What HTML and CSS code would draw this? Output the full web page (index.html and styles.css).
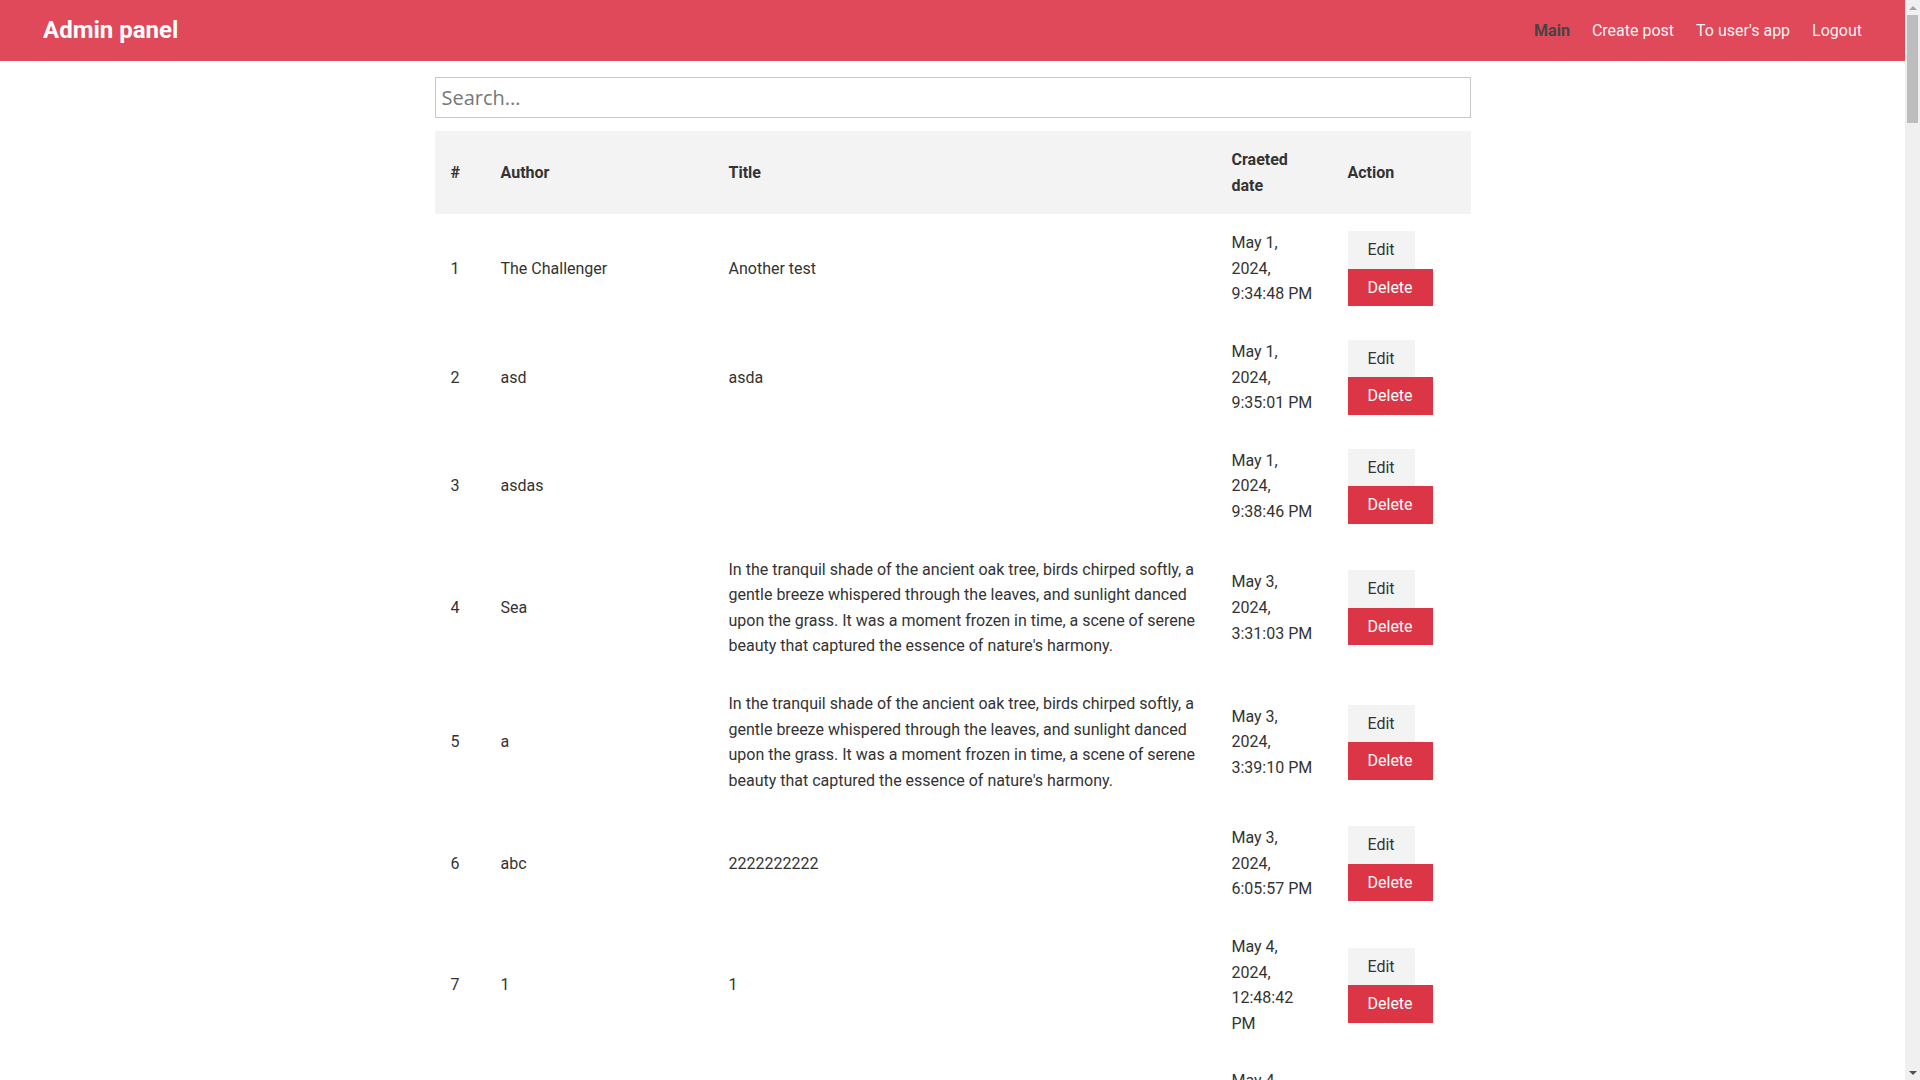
FILE: index.html
```html
<!DOCTYPE html>
<html lang="en">
<head>
<meta charset="utf-8">
<title>Admin panel</title>
<link rel="stylesheet" href="styles.css">
</head>
<body>
<header class="navbar">
  <div class="brand">Admin panel</div>
  <nav class="nav">
    <a class="nav-link active" href="#">Main</a>
    <a class="nav-link" href="#">Create post</a>
    <a class="nav-link" href="#">To user's app</a>
    <a class="nav-link" href="#">Logout</a>
  </nav>
</header>
<main class="container">
  <input class="search" type="text" placeholder="Search...">
  <table class="posts">
    <colgroup>
      <col class="c-num"><col class="c-author"><col class="c-title"><col class="c-date"><col class="c-action">
    </colgroup>
    <thead>
      <tr><th>#</th><th>Author</th><th>Title</th><th>Craeted date</th><th>Action</th></tr>
    </thead>
    <tbody>
      <tr><td>1</td><td>The Challenger</td><td>Another test</td><td>May 1, 2024, 9:34:48 PM</td><td><div class="actions"><button class="btn btn-edit">Edit</button><button class="btn btn-delete">Delete</button></div></td></tr>
      <tr><td>2</td><td>asd</td><td>asda</td><td>May 1, 2024, 9:35:01 PM</td><td><div class="actions"><button class="btn btn-edit">Edit</button><button class="btn btn-delete">Delete</button></div></td></tr>
      <tr><td>3</td><td>asdas</td><td></td><td>May 1, 2024, 9:38:46 PM</td><td><div class="actions"><button class="btn btn-edit">Edit</button><button class="btn btn-delete">Delete</button></div></td></tr>
      <tr><td>4</td><td>Sea</td><td>In the tranquil shade of the ancient oak tree, birds chirped softly, a gentle breeze whispered through the leaves, and sunlight danced upon the grass. It was a moment frozen in time, a scene of serene beauty that captured the essence of nature's harmony.</td><td>May 3, 2024, 3:31:03 PM</td><td><div class="actions"><button class="btn btn-edit">Edit</button><button class="btn btn-delete">Delete</button></div></td></tr>
      <tr><td>5</td><td>a</td><td>In the tranquil shade of the ancient oak tree, birds chirped softly, a gentle breeze whispered through the leaves, and sunlight danced upon the grass. It was a moment frozen in time, a scene of serene beauty that captured the essence of nature's harmony.</td><td>May 3, 2024, 3:39:10 PM</td><td><div class="actions"><button class="btn btn-edit">Edit</button><button class="btn btn-delete">Delete</button></div></td></tr>
      <tr><td>6</td><td>abc</td><td>2222222222</td><td>May 3, 2024, 6:05:57 PM</td><td><div class="actions"><button class="btn btn-edit">Edit</button><button class="btn btn-delete">Delete</button></div></td></tr>
      <tr><td>7</td><td>1</td><td>1</td><td>May 4, 2024, 12:48:42 PM</td><td><div class="actions"><button class="btn btn-edit">Edit</button><button class="btn btn-delete">Delete</button></div></td></tr>
      <tr><td>8</td><td>2</td><td>2</td><td>May 4, 2024, 12:48:50 PM</td><td><div class="actions"><button class="btn btn-edit">Edit</button><button class="btn btn-delete">Delete</button></div></td></tr>
      <tr><td>9</td><td>3</td><td>3</td><td>May 4, 2024, 12:48:57 PM</td><td><div class="actions"><button class="btn btn-edit">Edit</button><button class="btn btn-delete">Delete</button></div></td></tr>
      <tr><td>10</td><td>4</td><td>4</td><td>May 4, 2024, 12:49:04 PM</td><td><div class="actions"><button class="btn btn-edit">Edit</button><button class="btn btn-delete">Delete</button></div></td></tr>
      <tr><td>11</td><td>5</td><td>5</td><td>May 4, 2024, 12:49:11 PM</td><td><div class="actions"><button class="btn btn-edit">Edit</button><button class="btn btn-delete">Delete</button></div></td></tr>
      <tr><td>12</td><td>6</td><td>6</td><td>May 4, 2024, 12:49:18 PM</td><td><div class="actions"><button class="btn btn-edit">Edit</button><button class="btn btn-delete">Delete</button></div></td></tr>
    </tbody>
  </table>
</main>
<div class="scrollbar" aria-hidden="true">
  <div class="sb-arrow sb-up"></div>
  <div class="sb-track"><div class="sb-thumb"></div></div>
  <div class="sb-arrow sb-down"></div>
</div>
</body>
</html>
```
FILE: styles.css
```css
* { box-sizing: border-box; }
html, body { margin: 0; padding: 0; }
html { scrollbar-width: none; }
html::-webkit-scrollbar { display: none; }
body {
  font-family: Roboto, "Liberation Sans", sans-serif;
  font-size: 16px;
  line-height: 1.6;
  color: #333;
  background: #fff;
  margin-right: 15px;
}
.navbar {
  height: 61px;
  background: #df4959;
  display: flex;
  align-items: center;
  justify-content: space-between;
  padding: 0 32px 0 43px;
}
.brand {
  color: #fff;
  font-size: 24px;
  font-weight: 700;
  line-height: 1;
  padding-bottom: 2px;
}
.nav { display: flex; align-items: center; }
.nav-link {
  color: rgba(255,255,255,0.94);
  text-decoration: none;
  font-size: 16px;
  padding: 0 11px;
}
.nav-link.active { color: #444; font-weight: 700; }
.container {
  width: 1036px;
  margin: 16px auto 0;
}
.search {
  display: block;
  width: 100%;
  height: 41px;
  border: 1px solid #c8c8c8;
  padding: 0 6px;
  font-family: "Open Sans", sans-serif;
  font-size: 20px;
  color: #333;
  outline: none;
  margin: 0 0 13px;
}
.search::placeholder { color: #777; }
.posts {
  width: 100%;
  border-collapse: collapse;
  table-layout: fixed;
}
.c-num { width: 50px; }
.c-author { width: 228px; }
.c-title { width: 503px; }
.c-date { width: 116px; }
.c-action { width: 139px; }
.posts th {
  background: #f3f3f3;
  text-align: left;
  font-weight: 700;
  padding: 16px;
  vertical-align: middle;
}
.posts td {
  padding: 16px;
  vertical-align: middle;
}
.actions { display: flex; flex-direction: column; align-items: flex-start; }
.btn {
  font-family: Roboto, "Liberation Sans", sans-serif;
  font-size: 16px;
  line-height: 1.6;
  padding: 6px 20px;
  border: none;
  border-radius: 0;
  cursor: pointer;
}
.btn-edit { background: #f3f3f3; color: #333; }
.btn-delete { background: #dc3545; color: #fff; }

/* emulated classic browser scrollbar overlay */
.scrollbar {
  position: fixed;
  top: 0;
  right: 0;
  width: 15px;
  height: 100vh;
  background: #f0f0f0;
  display: flex;
  flex-direction: column;
}
.sb-arrow {
  height: 15px;
  flex: none;
  display: flex;
  align-items: center;
  justify-content: center;
}
.sb-arrow::before {
  content: "";
  width: 0;
  height: 0;
  border-left: 4px solid transparent;
  border-right: 4px solid transparent;
}
.sb-up::before { border-bottom: 4px solid #a3a3a3; }
.sb-down::before { border-top: 4px solid #505050; }
.sb-track { flex: 1; padding: 0 2px; }
.sb-thumb { height: 108px; background: #bdbdbd; }
```
